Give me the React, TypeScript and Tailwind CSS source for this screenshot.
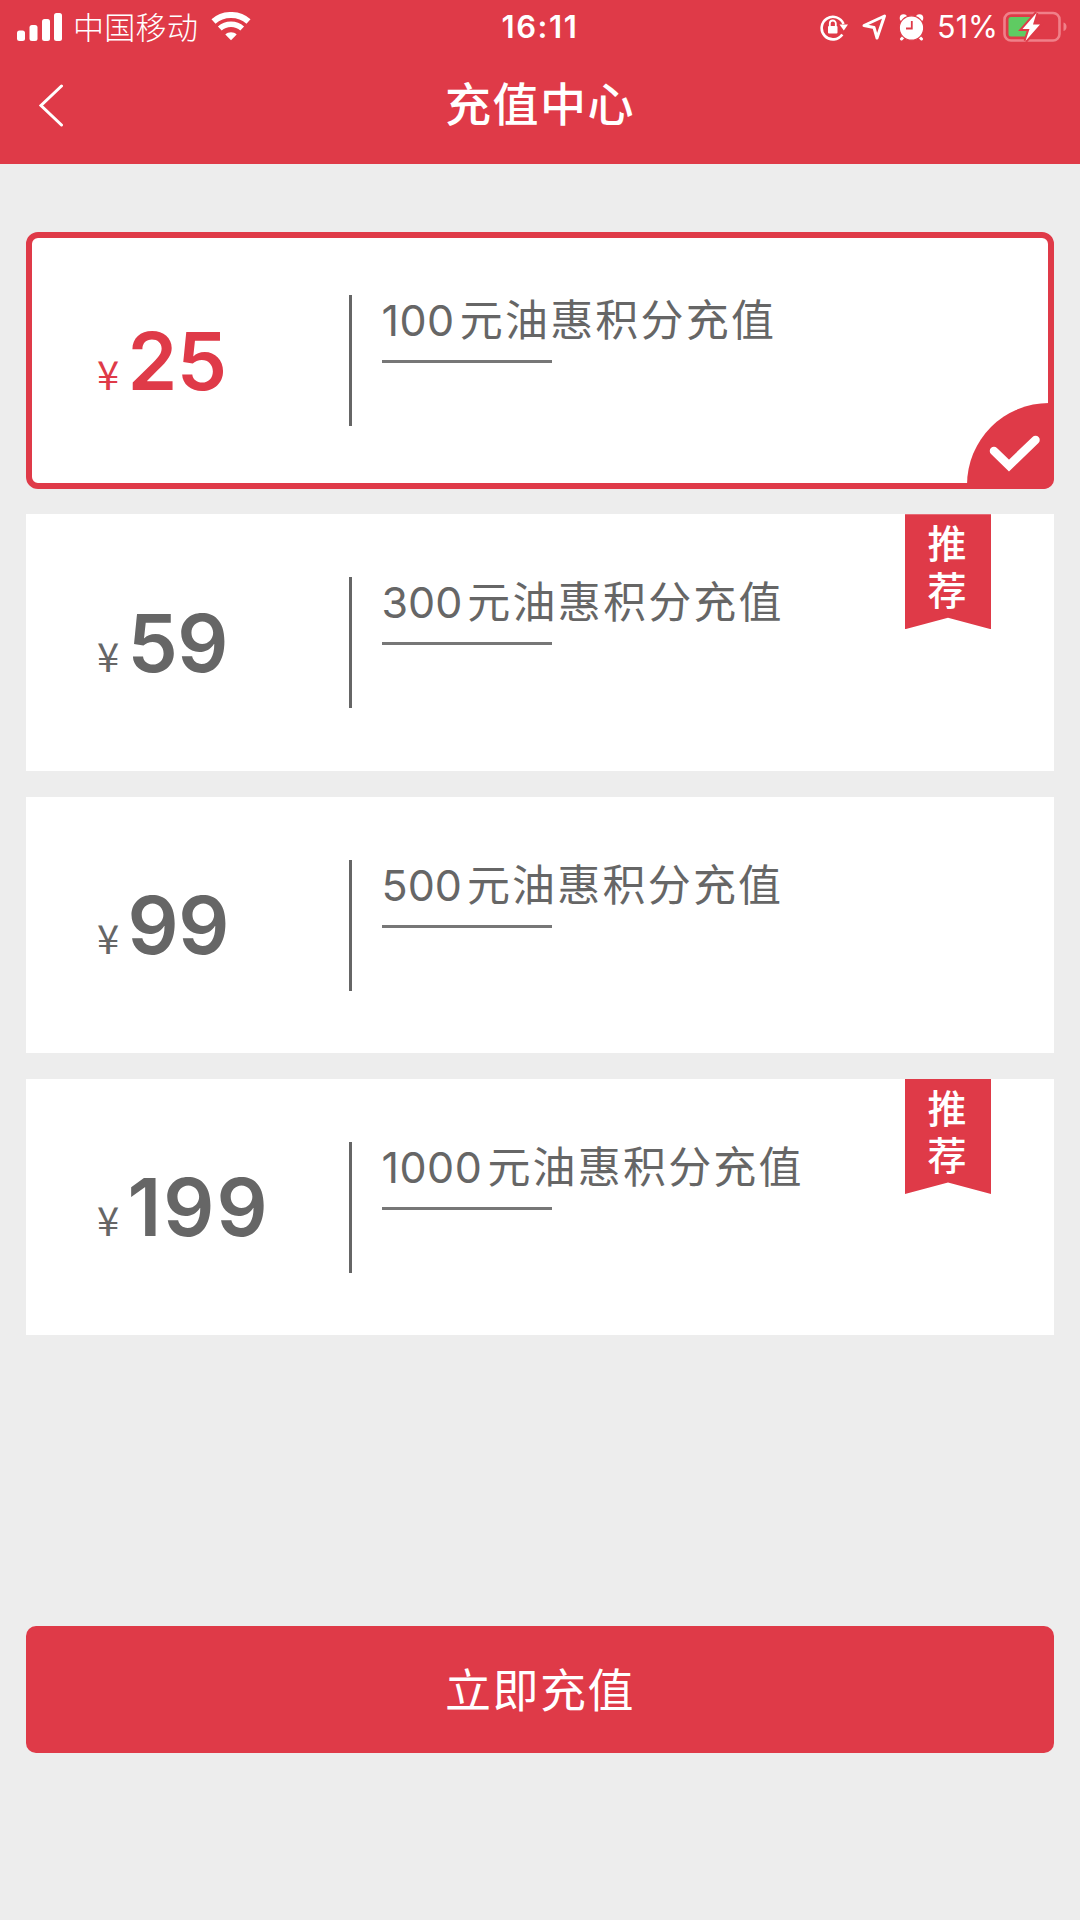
const plans = [
  { price: "25", points: "100", active: true, recommended: false },
  { price: "59", points: "300", active: false, recommended: true },
  { price: "99", points: "500", active: false, recommended: false },
  { price: "199", points: "1000", active: false, recommended: true },
];

function StatusBar() {
  return (
    <div className="grid h-[54px] grid-cols-3 items-center">
      <div className="flex items-center pl-[17px]">
        <svg width="46" height="30" viewBox="0 0 46 30" fill="#fff">
          <rect x="0" y="18.5" width="8" height="10.5" rx="2.5" />
          <rect x="12.5" y="13" width="8" height="16" rx="2.5" />
          <rect x="25" y="7" width="8" height="22" rx="2.5" />
          <rect x="37" y="1" width="8" height="28" rx="2.5" />
        </svg>
        <span className="ml-2.5 pb-[2px] font-['Noto_Sans_CJK_SC',sans-serif] text-[31px] leading-[52px] font-light tracking-[0.3px]">
          中国移动
        </span>
        <svg className="ml-[13px]" width="40" height="30" viewBox="0 0 40 30" fill="none" stroke="#fff">
          <path d="M2.5 9.5C12 0.8 28 0.8 37.5 9.5" strokeWidth="6" />
          <path d="M8.8 16.5C15 10.8 25 10.8 31.2 16.5" strokeWidth="5.5" />
          <path d="M20 28.2L14.3 22.4C17.2 19.4 22.8 19.4 25.7 22.4Z" fill="#fff" stroke="none" />
        </svg>
      </div>
      <div className="text-center font-['Inter',sans-serif] text-[31px] leading-[54px] font-semibold tracking-[1.6px] [font-kerning:none]">
        16:11
      </div>
      <div className="flex items-center justify-end pr-[12px]">
        <svg width="28" height="28" viewBox="0 0 28 28" fill="none" stroke="#fff">
          <path d="M22.3 21.5A11.3 11.3 0 1 1 23.5 11" strokeWidth="2.6" />
          <path d="M19.5 11.5H28L23.8 17.5Z" fill="#fff" stroke="none" />
          <rect x="8" y="13" width="9.5" height="7.5" rx="1" fill="#fff" stroke="none" />
          <path d="M9.8 13.5V10.5A3 3 0 0 1 15.8 10.5V13.5" strokeWidth="1.8" />
        </svg>
        <svg className="ml-[14px]" width="25" height="28" viewBox="0 0 25 28" fill="none" stroke="#fff" strokeWidth="3" strokeLinejoin="round">
          <path d="M2 12.5L22.5 3L15 25L12 14.5Z" />
        </svg>
        <svg className="ml-3" width="25" height="28" viewBox="0 0 25 28">
          <path d="M5 23.5L2.5 26M20 23.5L22.5 26" stroke="#fff" strokeWidth="3" strokeLinecap="round" />
          <circle cx="4.5" cy="5" r="3.8" fill="#fff" />
          <circle cx="20.5" cy="5" r="3.8" fill="#fff" />
          <circle cx="12.5" cy="15" r="12.2" fill="#fff" stroke="#df3a48" strokeWidth="1.2" />
          <path d="M12.8 8V15.5H7" fill="none" stroke="#df3a48" strokeWidth="1.8" />
        </svg>
        <span className="ml-[13px] font-['Inter',sans-serif] text-[30.5px] leading-[54px]">51%</span>
        <svg className="ml-[5px]" width="65" height="34" viewBox="0 0 65 34">
          <rect x="1.5" y="3" width="55" height="27.5" rx="6.5" fill="none" stroke="#f08089" strokeWidth="2.6" />
          <path d="M60.5 12.5C64.5 13.5 64.5 20 60.5 21Z" fill="#f08089" />
          <path d="M8 7H29V26.5H8Q5.5 26.5 5.5 24V9.5Q5.5 7 8 7Z" fill="#5fcb62" />
          <path
            d="M33.5 3L19.5 19H26.5L22.5 31L37 14.5H30Z"
            fill="#fff"
            stroke="#df3a48"
            strokeWidth="4"
            paintOrder="stroke"
          />
        </svg>
      </div>
    </div>
  );
}

function Ribbon() {
  return (
    <div className="absolute -top-[6px] right-[57px] flex h-[115px] w-[86px] justify-center bg-[#df3a48] pt-[10px] pr-[2px] text-white [clip-path:polygon(0_0,100%_0,100%_100%,50%_90%,0_100%)]">
      <span className="font-['Noto_Sans_CJK_SC',sans-serif] text-[39px] leading-[60px] font-medium tracking-[7.5px] [writing-mode:vertical-rl]">
        推荐
      </span>
    </div>
  );
}

function CheckCorner() {
  return (
    <div className="absolute -right-[6px] -bottom-[6px] h-[86px] w-[87px] rounded-tl-[82px] rounded-br-[10px] bg-[#df3a48]">
      <svg width="87" height="86" viewBox="0 0 87 86" fill="none">
        <path
          d="M27 48L42 62.5L68.5 37"
          stroke="#fff"
          strokeWidth="8.5"
          strokeLinecap="round"
        />
      </svg>
    </div>
  );
}

function PlanCard({ price, points, active, recommended }: (typeof plans)[number]) {
  return (
    <div
      className={
        active
          ? "relative flex h-[256.5px] rounded-[12px] border-[6px] border-[#df3a48] bg-white text-[#df3a48]"
          : "relative flex h-[256.5px] border-[6px] border-white bg-white text-[#666]"
      }
    >
      <div className="flex w-[317px] items-baseline pt-[73.5px] pl-[65px]">
        <span className="w-[30.5px] font-['Noto_Sans_CJK_SC',sans-serif] text-[40px] leading-[97px]">¥</span>
        <span
          className={
            price.length > 2
              ? "font-['Inter',sans-serif] text-[80px] leading-[97px] font-semibold tracking-[2px]"
              : "font-['Inter',sans-serif] text-[80px] leading-[97px] font-semibold tracking-[-0.5px]"
          }
        >
          {price}
        </span>
      </div>
      <div className="mt-[57px] h-[131px] w-[2.5px] bg-[#666]" />
      <div className="ml-[30px] pt-[49px] text-[#666]">
        <div className="flex h-[73px] items-baseline leading-[60px]">
          <span
            className={
              points.startsWith("1")
                ? "font-['Inter',sans-serif] text-[43px] tracking-[0.5px]"
                : "font-['Inter',sans-serif] text-[43px]"
            }
          >
            {points}
          </span>
          <span className="ml-[5px] font-['Noto_Sans_CJK_SC',sans-serif] text-[43px] tracking-[2.2px]">
            元油惠积分充值
          </span>
        </div>
        <div className="h-[3px] w-[170px] bg-[#777]" />
      </div>
      {recommended && <Ribbon />}
      {active && <CheckCorner />}
    </div>
  );
}

export default function App() {
  return (
    <div className="h-[1920px] w-[1080px] overflow-hidden bg-[#ededed]">
      <header className="h-[164px] bg-[#df3a48] text-white">
        <StatusBar />
        <div className="grid h-[102px] grid-cols-[200px_1fr_200px] items-center">
          <svg className="ml-[38px]" width="26" height="44" viewBox="0 0 26 44" fill="none">
            <path d="M23.5 3L3 22.5L23.5 42" stroke="#fff" strokeWidth="3" strokeLinecap="round" />
          </svg>
          <h1 className="pb-[7px] text-center font-['Noto_Sans_CJK_SC',sans-serif] text-[46px] font-medium tracking-[1.5px]">
            充值中心
          </h1>
        </div>
      </header>
      <main className="px-[26px] pt-[68px]">
        <div className="flex flex-col gap-[25.8px]">
          {plans.map((plan) => (
            <PlanCard key={plan.price} {...plan} />
          ))}
        </div>
        <button className="mt-[290.5px] h-[127px] w-full rounded-[10px] bg-[#df3a48] pb-[3px] font-['Noto_Sans_CJK_SC',sans-serif] text-[46px] tracking-[1.5px] text-white">
          立即充值
        </button>
      </main>
    </div>
  );
}
